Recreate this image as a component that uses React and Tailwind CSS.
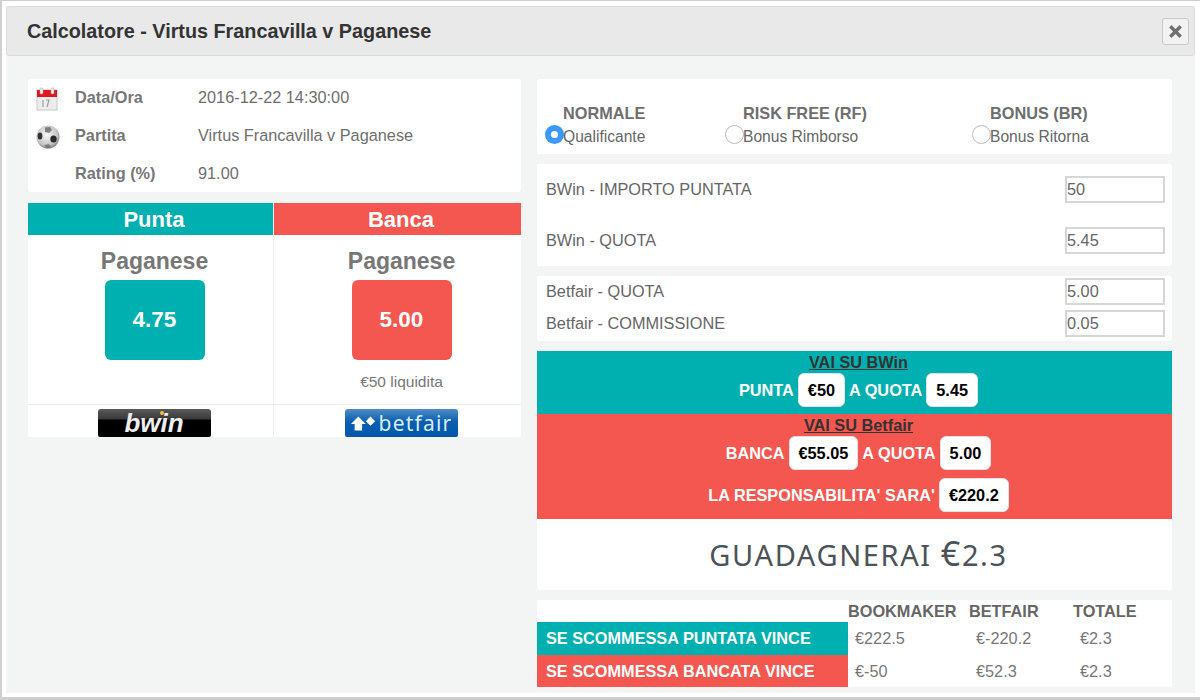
import { useState } from "react";

const font = "font-['Liberation_Sans',Arial,sans-serif]";

const info = [
  { label: "Data/Ora", value: "2016-12-22 14:30:00", icon: <CalendarIcon /> },
  { label: "Partita", value: "Virtus Francavilla v Paganese", icon: <BallIcon /> },
  { label: "Rating (%)", value: "91.00", icon: null },
];

function CalendarIcon() {
  return (
    <svg width="22" height="24" viewBox="0 0 22 24">
      <rect x="1" y="3" width="20" height="20" fill="#ececec" stroke="#c8c8c8" />
      <rect x="1" y="3" width="20" height="7" fill="#e3171f" />
      <rect x="4" y="1" width="3" height="6" rx="1" fill="#efefef" stroke="#999" strokeWidth="0.5" />
      <rect x="15" y="1" width="3" height="6" rx="1" fill="#efefef" stroke="#999" strokeWidth="0.5" />
      <path d="M7 13v7M10 13h3l-2 7" stroke="#9a9a9a" strokeWidth="1.1" fill="none" />
    </svg>
  );
}

function BallIcon() {
  return (
    <svg width="24" height="24" viewBox="0 0 24 24">
      <defs>
        <radialGradient id="ball" cx="45%" cy="40%" r="65%">
          <stop offset="0%" stopColor="#fafafa" />
          <stop offset="70%" stopColor="#c4c4c4" />
          <stop offset="100%" stopColor="#6f6f6f" />
        </radialGradient>
      </defs>
      <circle cx="12" cy="12" r="11.5" fill="url(#ball)" />
      <path d="M9 2.500l5-.5 2 3-3 3-4-1z" fill="#555" opacity="0.7" />
      <ellipse cx="4" cy="11" rx="2.400" ry="3.600" fill="#333" />
      <ellipse cx="17.500" cy="14" rx="3.200" ry="3.600" fill="#2b2b2b" />
      <path d="M8 20l5-1 2 3-4 1.500z" fill="#666" opacity="0.7" />
    </svg>
  );
}

function Radio({ checked, title, label, className }) {
  return (
    <div className={`flex items-end ${className}`}>
      {checked ? (
        <span className="w-[19px] h-[19px] mb-[3px] -mr-[1px] shrink-0 rounded-full bg-[#3b99fc] flex items-center justify-center">
          <span className="w-[7px] h-[7px] rounded-full bg-white" />
        </span>
      ) : (
        <span className="w-[19px] h-[19px] mb-[3px] -mr-[1px] shrink-0 rounded-full bg-white border border-[#bbbbbb]" />
      )}
      <div className="leading-none">
        <div className="text-[16.300px] font-bold text-[#6e6e6e] mb-[8px] whitespace-nowrap">{title}</div>
        <div className="text-[15.600px] text-[#666] pb-[2px] whitespace-nowrap">{label}</div>
      </div>
    </div>
  );
}

function Field({ label, defaultValue, className = "" }) {
  const [value, setValue] = useState(defaultValue);
  return (
    <div className={`flex items-center justify-between ${className}`}>
      <span className="text-[16.300px] text-[#666]">{label}</span>
      <input
        value={value}
        onChange={(e) => setValue(e.target.value)}
        className="w-[100px] h-[27px] border-2 border-[#d6d6d6] bg-white px-[0px] text-[16.300px] text-[#666] outline-none"
      />
    </div>
  );
}

function Chip({ children }) {
  return (
    <span className="inline-flex h-[34px] items-center justify-center rounded-md bg-white border border-[#dde3e6] px-[9px] text-[16.300px] font-bold text-black">
      {children}
    </span>
  );
}

function Odds({ header, headerBg, boxBg, odds, note, className }) {
  return (
    <div className={`flex flex-col ${className}`}>
      <div className={`h-[32px] pl-[7px] flex items-center justify-center text-white font-bold text-[22px] ${headerBg}`}>{header}</div>
      <div className="h-[170px] pl-[8px] flex flex-col items-center border-b border-[#eeeeee]">
        <div className="mt-[13px] text-[23px] leading-[26px] font-bold text-[#777]">Paganese</div>
        <div className={`mt-[6px] w-[100px] h-[80px] rounded-md flex items-center justify-center text-white font-bold text-[22.500px] ${boxBg}`}>{odds}</div>
        {note && <div className="mt-[13px] text-[15.500px] leading-[18px] text-[#777]">{note}</div>}
      </div>
    </div>
  );
}

export default function App() {
  return (
    <div className={`${font} w-[1200px] h-[700px] overflow-hidden bg-white border-l-2 border-t border-b-[3px] border-[#cfcfcf] pl-[4px] pr-[5px] pt-[5px] pb-[4px]`}>
      <div className="h-full bg-[#f3f5f5] flex flex-col">
        {/* Title bar */}
        <header className="h-[50px] shrink-0 bg-[#e9e9e9] border border-[#dcdcdc] rounded-[3px] flex items-center justify-between pl-[20px] pr-[5px]">
          <h1 className="pt-[2px] text-[19.800px] font-bold text-[#333]">Calcolatore - Virtus Francavilla v Paganese</h1>
          <button className="w-[27px] h-[27px] rounded-[3px] bg-[#f2f2f2] border border-[#c9c9c9] flex items-center justify-center">
            <svg width="13" height="13" viewBox="0 0 13 13">
              <path d="M2.500 2.500l8 8M10.500 2.500l-8 8" stroke="#707070" strokeWidth="3.400" strokeLinecap="square" />
            </svg>
          </button>
        </header>

        <div className="flex pl-[22px] pt-[23px] gap-[16px]">
          {/* Left column */}
          <div className="w-[493px] flex flex-col gap-[11px]">
            <section className="h-[113px] bg-white rounded-[2px] border border-white">
              <div className="-mt-[2px]">
                {info.map((row) => (
                  <div key={row.label} className="h-[38px] flex items-center">
                    <div className="w-[46px] pl-[7px] mt-[4px] flex justify-start">{row.icon}</div>
                    <div className="w-[123px] text-[16.300px] font-bold text-[#777]">{row.label}</div>
                    <div className="text-[16.300px] text-[#6e6e6e]">{row.value}</div>
                  </div>
                ))}
              </div>
            </section>

            <section className="bg-white rounded-[2px]">
              <div className="flex">
                <Odds header="Punta" headerBg="bg-[#00afaf]" boxBg="bg-[#00afaf]" odds="4.75" className="w-[246px] shrink-0 border-r border-[#eeeeee]" />
                <Odds header="Banca" headerBg="bg-[#f4574f]" boxBg="bg-[#f4574f]" odds="5.00" note="€50 liquidita" className="flex-1" />
              </div>
              <div className="flex h-[32px]">
                <div className="w-[246px] shrink-0 border-r border-[#eeeeee] flex justify-center items-end pl-[7px]">
                  <div className="w-[113px] h-[28px] rounded-t-[3px] rounded-b-[2px] bg-[linear-gradient(#5a5a5a,#3a3a3a_35%,#000_40%,#000)] flex items-center justify-center">
                    <span className="relative text-[#eeeeee] text-[26px] font-bold italic leading-none">
                      bwin
                      <span className="absolute left-[36px] top-[1px] w-[4px] h-[4px] rounded-full bg-[#f2c230]" />
                    </span>
                  </div>
                </div>
                <div className="flex-1 flex justify-center items-end pl-[7px]">
                  <div className="w-[113px] h-[28px] rounded-t-[3px] rounded-b-[2px] bg-[linear-gradient(#4f8cc7,#0a5fb0_45%,#0057aa)] flex items-center justify-center gap-[2px]">
                    <svg width="27" height="18" viewBox="0 0 29 18">
                      <path d="M1 10l8-8 8 8h-4v7H5v-7z" fill="#fff" />
                      <path d="M22 2l5 5-5 5-5-5z" fill="#fff" />
                    </svg>
                    <span className="text-[#d8ecfa] text-[21px] font-['Noto_Sans',sans-serif] leading-none tracking-[1.200px]">betfair</span>
                  </div>
                </div>
              </div>
            </section>
          </div>

          {/* Right column */}
          <div className="w-[635px] flex flex-col">
            <section className="h-[75px] bg-white rounded-[2px] border border-white flex items-end pl-[7px] pb-[6px]">
              <Radio checked title="NORMALE" label="Qualificante" className="w-[180px]" />
              <Radio title="RISK FREE (RF)" label="Bonus Rimborso" className="w-[247px]" />
              <Radio title="BONUS (BR)" label="Bonus Ritorna" className="" />
            </section>

            <section className="mt-[10px] h-[102px] bg-white rounded-[2px] border border-white pl-[8px] pr-[6px] pt-[11px]">
              <Field label="BWin - IMPORTO PUNTATA" defaultValue="50" className="mb-[24px]" />
              <Field label="BWin - QUOTA" defaultValue="5.45" />
            </section>

            <section className="mt-[10px] h-[65px] bg-white rounded-[2px] border border-white pl-[8px] pr-[6px] pt-[1px]">
              <Field label="Betfair - QUOTA" defaultValue="5.00" className="mb-[5px]" />
              <Field label="Betfair - COMMISSIONE" defaultValue="0.05" />
            </section>

            <section className="mt-[10px] h-[63px] pl-[8px] bg-[#00afaf] flex flex-col items-center text-[16.300px] font-bold text-white">
              <div className="mt-[2px] leading-[18px] text-[#333] underline">VAI SU BWin</div>
              <div className="mt-[2px] flex items-center gap-[4px]">
                <span>PUNTA</span> <Chip>€50</Chip> <span>A QUOTA</span> <Chip>5.45</Chip>
              </div>
            </section>

            <section className="h-[105px] pl-[8px] bg-[#f4574f] flex flex-col items-center text-[16.300px] font-bold text-white">
              <div className="mt-[2px] leading-[18px] text-[#333] underline">VAI SU Betfair</div>
              <div className="mt-[2px] flex items-center gap-[4px]">
                <span>BANCA</span> <Chip>€55.05</Chip> <span>A QUOTA</span> <Chip>5.00</Chip>
              </div>
              <div className="mt-[8px] flex items-center gap-[4px]">
                <span>LA RESPONSABILITA' SARA'</span> <Chip>€220.2</Chip>
              </div>
            </section>

            <section className="h-[71px] pl-[8px] bg-white rounded-b-[2px] flex items-center justify-center font-['Noto_Sans',sans-serif] text-[29px] text-[#4b5258] tracking-[1.600px]">
              <span>GUADAGNERAI <span className="text-[34px] leading-none">€</span>2.3</span>
            </section>

            <section className="mt-[10px] h-[87px] bg-white rounded-[2px] grid grid-cols-[311px_121px_104px_1fr] grid-rows-[22px_33px_32px] text-[16.300px]">
              <div />
              <div className="font-bold text-[#666] flex items-center whitespace-nowrap">BOOKMAKER</div>
              <div className="font-bold text-[#666] flex items-center">BETFAIR</div>
              <div className="font-bold text-[#666] flex items-center">TOTALE</div>

              <div className="bg-[#00afaf] text-white font-bold flex items-center pl-[9px]">SE SCOMMESSA PUNTATA VINCE</div>
              <div className="text-[#777] flex items-center pl-[7px]">€222.5</div>
              <div className="text-[#777] flex items-center pl-[7px]">€-220.2</div>
              <div className="text-[#777] flex items-center pl-[7px]">€2.3</div>

              <div className="bg-[#f4574f] text-white font-bold flex items-center pl-[9px]">SE SCOMMESSA BANCATA VINCE</div>
              <div className="text-[#777] flex items-center pl-[7px]">€-50</div>
              <div className="text-[#777] flex items-center pl-[7px]">€52.3</div>
              <div className="text-[#777] flex items-center pl-[7px]">€2.3</div>
            </section>
          </div>
        </div>
      </div>
    </div>
  );
}
